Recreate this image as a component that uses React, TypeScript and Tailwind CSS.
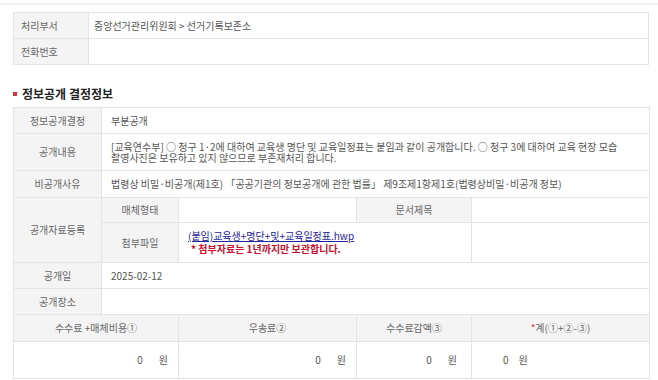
const th = "border border-[#e4e4e4] bg-[#f4f4f4] text-[#666] font-normal";
const td = "border border-[#e4e4e4] bg-white text-[#555]";

function Won({ className = "" }: { className?: string }) {
  return (
    <span className={className}>
      <span>0</span>
      <span className="ml-[16px]">원</span>
    </span>
  );
}

export default function App() {
  return (
    <div
      className="h-[380px] w-[658px] overflow-hidden bg-white pt-[3px] text-[10px] leading-[12px]"
      style={{ fontFamily: '"Noto Sans CJK KR", "Noto Sans", sans-serif' }}
    >
      <div className="border-t-2 border-[#f0f0f0] pl-[13px] pt-[7px]">
        {/* 부서 정보 */}
        <table className="w-[636px] table-fixed border-collapse">
          <colgroup>
            <col className="w-[75px]" />
            <col />
          </colgroup>
          <tbody>
            <tr className="h-[26px]">
              <th className={`${th} pl-[7px] text-left`}>처리부서</th>
              <td className={`${td} pl-[5px]`}>중앙선거관리위원회 &gt; 선거기록보존소</td>
            </tr>
            <tr className="h-[26px]">
              <th className={`${th} pl-[7px] text-left`}>전화번호</th>
              <td className={td}></td>
            </tr>
          </tbody>
        </table>

        <h3 className="mt-[22px] flex items-center gap-[5px] text-[12px] font-bold leading-[14px] text-[#222]">
          <span className="h-[4px] w-[4px] bg-[#e0303a]" />
          정보공개 결정정보
        </h3>

        {/* 결정 정보 */}
        <table className="mt-[6px] w-[636px] table-fixed border-collapse">
          <colgroup>
            <col className="w-[88px]" />
            <col className="w-[77px]" />
            <col className="w-[178px]" />
            <col className="w-[115px]" />
            <col className="w-[178px]" />
          </colgroup>
          <tbody>
            <tr className="h-[26px]">
              <th className={th}>정보공개결정</th>
              <td className={`${td} pl-[9px]`} colSpan={4}>부분공개</td>
            </tr>
            <tr className="h-[37px]">
              <th className={th}>공개내용</th>
              <td className={`${td} break-keep pl-[9px] pr-[20px] leading-[11px]`} colSpan={4}>
                [교육연수부] ○ 청구 1·2에 대하여 교육생 명단 및 교육일정표는 붙임과 같이 공개합니다. ○ 청구 3에 대하여 교육 현장 모습 촬영사진은 보유하고 있지 않으므로 부존재처리 합니다.
              </td>
            </tr>
            <tr className="h-[27px]">
              <th className={th}>비공개사유</th>
              <td className={`${td} pl-[9px]`} colSpan={4}>
                법령상 비밀·비공개(제1호) 「공공기관의 정보공개에 관한 법률」 제9조제1항제1호(법령상비밀·비공개 정보)
              </td>
            </tr>
            <tr className="h-[25px]">
              <th className={th} rowSpan={2}>공개자료등록</th>
              <th className={th}>매체형태</th>
              <td className={td}></td>
              <th className={th}>문서제목</th>
              <td className={td}></td>
            </tr>
            <tr className="h-[40px]">
              <th className={th}>첨부파일</th>
              <td className={`${td} pl-[9px] leading-[12px]`} colSpan={2}>
                <a href="#" className="block text-[#2424a0] underline">
                  (붙임)교육생+명단+및+교육일정표.hwp
                </a>
                <div className="mt-[1px] pl-[3px] font-bold text-[#c8102e]">* 첨부자료는 1년까지만 보관합니다.</div>
              </td>
              <td className={td}></td>
            </tr>
            <tr className="h-[26px]">
              <th className={th}>공개일</th>
              <td className={`${td} pl-[9px]`} colSpan={4}>2025-02-12</td>
            </tr>
            <tr className="h-[26px]">
              <th className={th}>공개장소</th>
              <td className={td} colSpan={4}></td>
            </tr>
            <tr className="h-[27px]">
              <th className={th} colSpan={2}>수수료 +매체비용①</th>
              <th className={th}>우송료②</th>
              <th className={th}>수수료감액③</th>
              <th className={th}>
                <span className="text-[#e0303a]">*</span>계(①+②-③)
              </th>
            </tr>
            <tr className="h-[37px]">
              <td className={`${td} pr-[10px] text-right`} colSpan={2}>
                <Won />
              </td>
              <td className={`${td} pr-[10px] text-right`}>
                <Won />
              </td>
              <td className={`${td} pr-[14px] text-right`}>
                <Won />
              </td>
              <td className={`${td} pl-[31px]`}>
                <span>0</span>
                <span className="ml-[10px]">원</span>
              </td>
            </tr>
          </tbody>
        </table>
      </div>
    </div>
  );
}
